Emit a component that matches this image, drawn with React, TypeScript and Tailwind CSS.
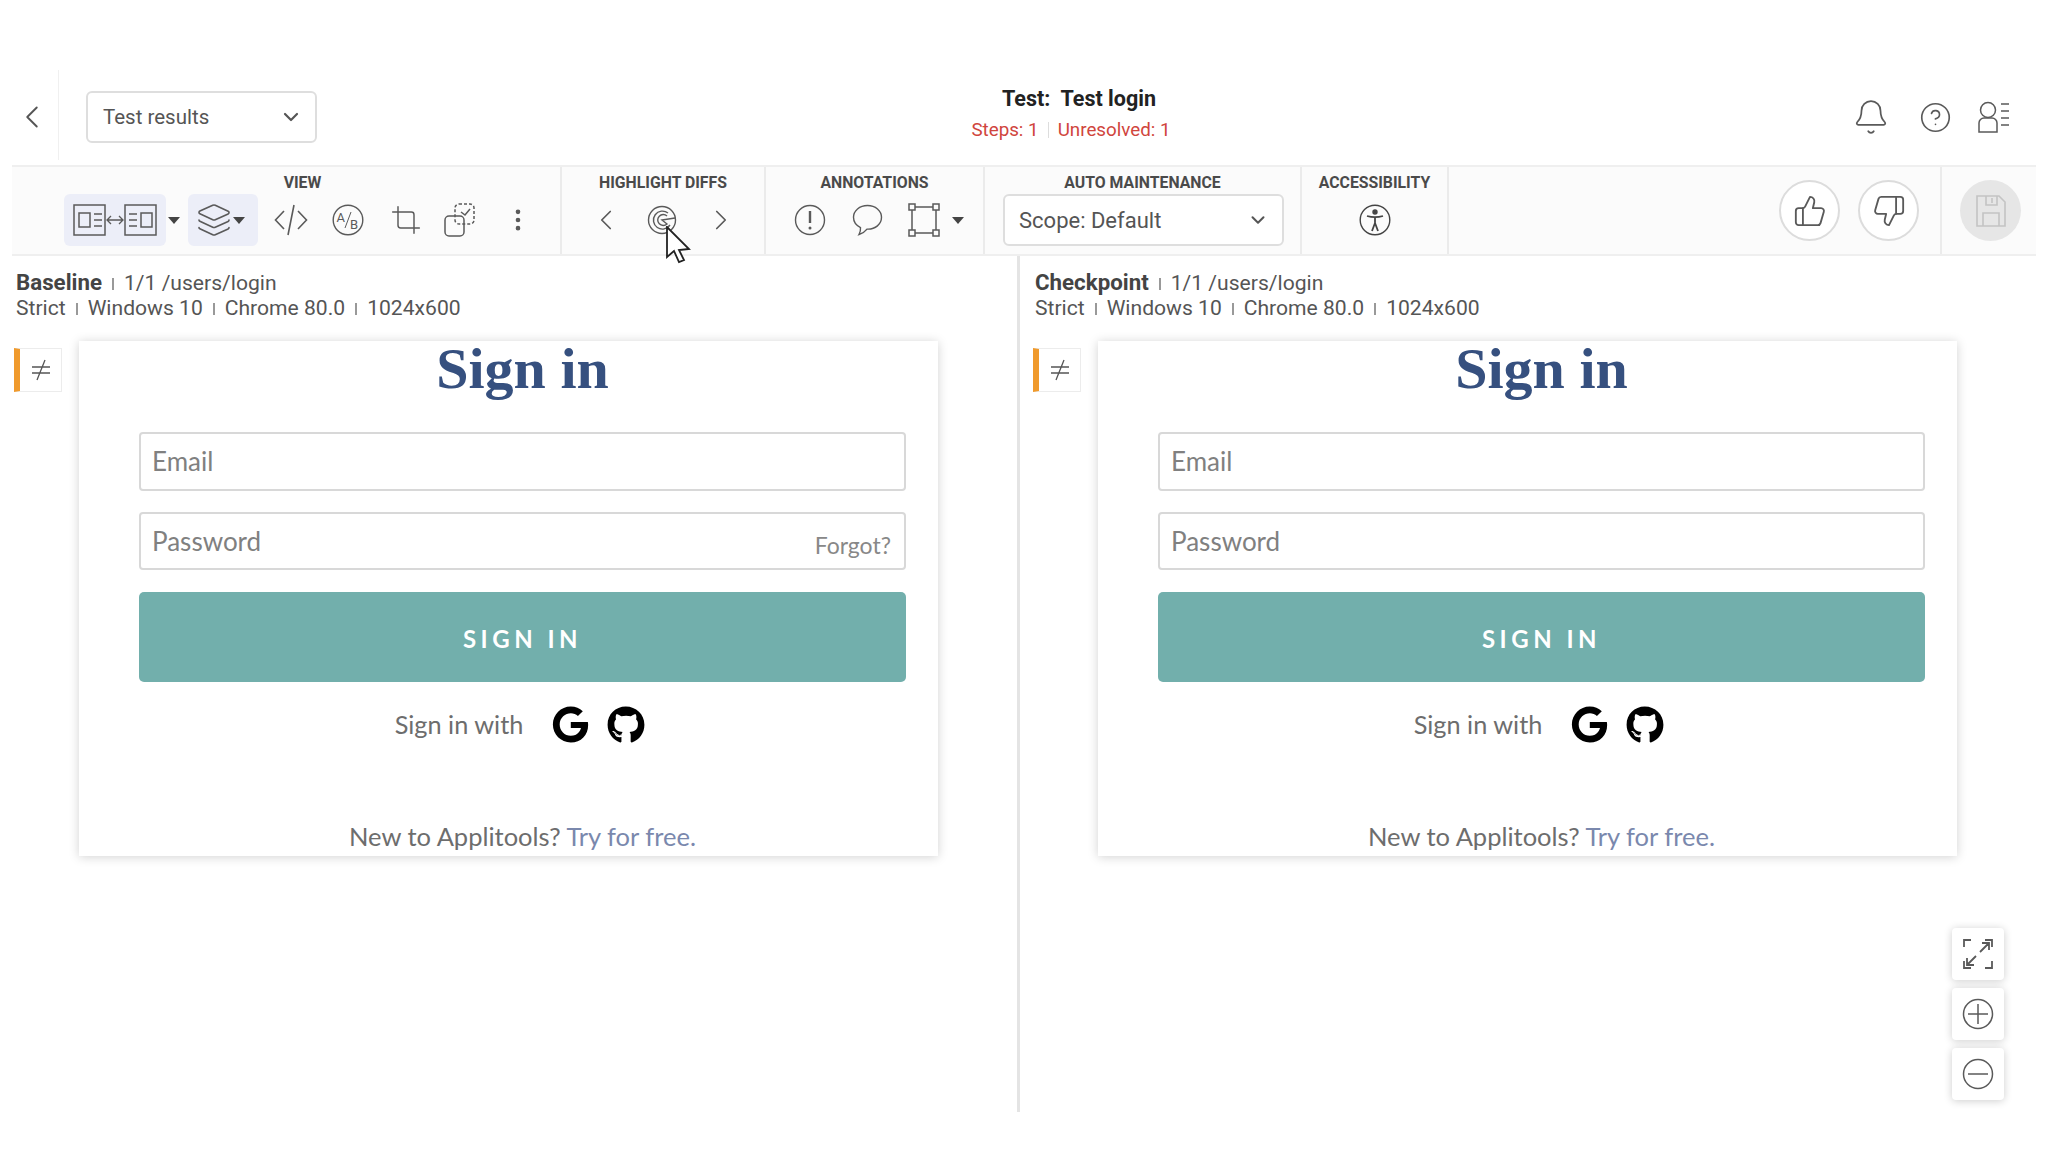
import { Bell, ChevronDown, ChevronLeft, ChevronRight, CircleHelp, Crop, EllipsisVertical, Layers, ThumbsDown, ThumbsUp } from 'lucide-react';
import { FaGithub, FaGoogle } from 'react-icons/fa';
import type { ReactNode } from 'react';

const ic = '#5a5a5a';

function Caret() {
  return (
    <svg width="12" height="7" viewBox="0 0 12 7"><path d="M0 0h12L6 7z" fill="#444" /></svg>
  );
}

function SplitIcon({ flip }: { flip?: boolean }) {
  return (
    <svg width="33" height="32" viewBox="0 0 33 32" fill="none" stroke={ic} strokeWidth="1.5">
      <rect x="1" y="1" width="31" height="30" />
      {flip ? (
        <>
          <rect x="17" y="9" width="11" height="14" />
          <path d="M5 10h8M5 16h8M5 22h8" />
        </>
      ) : (
        <>
          <rect x="6" y="9" width="11" height="14" />
          <path d="M21 10h8M21 16h8M21 22h8" />
        </>
      )}
    </svg>
  );
}

function Section({ label, className, rowClass, children }: { label: string; className: string; rowClass?: string; children: ReactNode }) {
  return (
    <div className={`flex flex-col items-center border-r-2 border-[#ebebeb] ${className}`}>
      <div className="mt-[6px] h-[20px] text-[15.800px] leading-[20px] font-bold whitespace-nowrap text-[#4a4a4a]">{label}</div>
      <div className={`mt-[1px] flex h-[52px] w-full items-center ${rowClass ?? ''}`}>{children}</div>
    </div>
  );
}

function Toolbar() {
  return (
    <div className="mx-[12px] flex h-[91px] w-[2024px] border-y-2 border-[#efefef] bg-[#fbfbfb]">
      <Section label="VIEW" className="w-[550px] pl-[52px] pr-[19px]">
        <div className="flex h-[52px] w-[102px] items-center justify-center gap-0 rounded-[6px] bg-[#eceef8]">
          <SplitIcon />
          <svg width="18" height="10" viewBox="0 0 18 10" fill="none" stroke={ic} strokeWidth="1.3"><path d="M1 5h16M5 1 1 5l4 4M13 1l4 4-4 4" /></svg>
          <SplitIcon flip />
        </div>
        <div className="ml-[2px]"><Caret /></div>
        <div className="ml-[8px] flex h-[52px] w-[70px] items-center gap-[1px] rounded-[6px] bg-[#eceef8] pl-[8px]">
          <Layers size={36} color={ic} strokeWidth={1.1} />
          <Caret />
        </div>
        <svg className="ml-[16px]" width="34" height="32" viewBox="0 0 34 32" fill="none" stroke={ic} strokeWidth="1.6">
          <path d="M10 7 1.500 16 10 25M24 7l8.500 9L24 25M20 1 14 31" />
        </svg>
        <svg className="ml-[24px]" width="32" height="32" viewBox="0 0 32 32" fill="none" stroke={ic} strokeWidth="1.4">
          <circle cx="16" cy="16" r="14.800" />
          <path d="m13 24 6-16" strokeWidth="1" />
          <text x="4.500" y="18" fontSize="13" fill={ic} stroke="none" fontFamily="Roboto, sans-serif">A</text>
          <text x="18" y="25" fontSize="13" fill={ic} stroke="none" fontFamily="Roboto, sans-serif">B</text>
        </svg>
        <Crop className="ml-[26px]" size={32} color={ic} strokeWidth={1.1} />
        <svg className="ml-[22px]" width="32" height="34" viewBox="0 0 32 34" fill="none" stroke={ic} strokeWidth="1.5">
          <rect x="1" y="13" width="19" height="20" rx="4" />
          <rect x="11" y="1" width="19" height="20" rx="4" strokeDasharray="3 2" />
          <path d="m17 9 4 3 5-6" />
        </svg>
        <EllipsisVertical className="ml-[28px]" size={28} color={ic} strokeWidth={2} />
      </Section>
      <Section label="HIGHLIGHT DIFFS" className="w-[204px]" rowClass="pl-[27px]">
        <ChevronLeft size={34} color={ic} strokeWidth={1.2} />
        <svg className="ml-[24px]" width="30" height="32" viewBox="0 0 30 32" fill="none" stroke={ic} strokeWidth="1.4">
          <circle cx="15" cy="16" r="13.500" />
          <path d="M21 9a9 9 0 1 0 2 12" />
          <path d="M20 12a5.500 5.500 0 1 0 0 8l-5-4 13-2" />
        </svg>
        <ChevronRight className="ml-[27px]" size={34} color={ic} strokeWidth={1.2} />
      </Section>
      <Section label="ANNOTATIONS" className="w-[219px]" rowClass="pl-[28px]">
        <svg width="32" height="32" viewBox="0 0 32 32" fill="none" stroke={ic} strokeWidth="1.4">
          <circle cx="16" cy="16" r="14.500" />
          <path d="M16 7v12" strokeWidth="2.400" />
          <circle cx="16" cy="24" r="1.500" fill={ic} stroke="none" />
        </svg>
        <svg className="ml-[26px]" width="31" height="32" viewBox="0 0 31 32" fill="none" stroke={ic} strokeWidth="1.4">
          <path d="M15.500 1.500c-8 0-14 5.200-14 11.800 0 4.600 3 8.300 7 10.300.2 2.600-.2 4.800-1.500 6.900 3.500-1 6.300-3.200 8-5.400 8.500.5 14.500-5.200 14.500-11.800S23.500 1.500 15.500 1.500z" />
        </svg>
        <svg className="ml-[25px]" width="32" height="34" viewBox="0 0 32 34" fill="none" stroke={ic} strokeWidth="1.5">
          <path d="M7 4h18M7 30h18M4 7v20M28 7v20" />
          <rect x="1" y="1" width="6" height="6" />
          <rect x="25" y="1" width="6" height="6" />
          <rect x="1" y="27" width="6" height="6" />
          <rect x="25" y="27" width="6" height="6" />
        </svg>
        <div className="ml-[12px]"><Caret /></div>
      </Section>
      <Section label="AUTO MAINTENANCE" className="w-[317px]" rowClass="pl-[18px]">
        <div className="flex h-[52px] w-[281px] items-center justify-between rounded-[6px] border-2 border-[#dedede] bg-white pl-[14px] pr-[13px] text-[22px] text-[#555]">
          Scope: Default
          <ChevronDown size={22} color="#555" strokeWidth={2.2} />
        </div>
      </Section>
      <Section label="ACCESSIBILITY" className="w-[147px]" rowClass="justify-center">
        <svg width="32" height="32" viewBox="0 0 32 32" fill="none" stroke="#444" strokeWidth="1.4">
          <circle cx="16" cy="16" r="14.800" />
          <circle cx="16" cy="8" r="2" fill="#444" />
          <path d="M8 12c5 1.500 11 1.500 16 0M16 13v6M16 19l-3 8M16 19l3 8" strokeWidth="1.800" />
        </svg>
      </Section>
      <div className="flex w-[494px] items-start">
        <div className="mt-[13px] ml-[330px] flex gap-[18px]">
          <div className="flex h-[61px] w-[61px] items-center justify-center rounded-full border-2 border-[#dcdcdc] bg-white">
            <ThumbsUp size={34} color={ic} strokeWidth={1.3} />
          </div>
          <div className="flex h-[61px] w-[61px] items-center justify-center rounded-full border-2 border-[#dcdcdc] bg-white">
            <ThumbsDown size={34} color={ic} strokeWidth={1.3} />
          </div>
        </div>
        <div className="ml-[21px] flex h-full items-start border-l-2 border-[#ebebeb] pl-[18px]">
          <div className="mt-[13px] flex h-[61px] w-[61px] items-center justify-center rounded-full bg-[#e6e6e6]">
            <svg width="30" height="32" viewBox="0 0 30 32" fill="none" stroke="#c4c4c4" strokeWidth="1.600">
              <path d="M1 1h22l6 6v24H1zM7 31V18h16v13M10 1v9h11V1M16 3v5" />
            </svg>
          </div>
        </div>
      </div>
    </div>
  );
}

function SignInCard({ forgot }: { forgot?: boolean }) {
  return (
    <div className="flex h-[515px] w-[859px] flex-col items-center bg-white pl-[60px] pr-[32px] font-['Lato',sans-serif] shadow-[0_1px_10px_rgba(0,0,0,0.18)]">
      <h1 className="mt-[-2px] h-[60px] font-['Liberation_Serif',serif] text-[58px] leading-[59px] font-bold text-[#36507f]">Sign in</h1>
      <div className="mt-[33px] flex h-[59px] w-[767px] items-center rounded-[4px] border-2 border-[#d8d8d8] pl-[11px] text-[26px] text-[#808080]">Email</div>
      <div className="mt-[21px] flex h-[58px] w-[767px] items-center justify-between rounded-[4px] border-2 border-[#d8d8d8] pl-[11px] pr-[13px] text-[26px] text-[#808080]">
        <span>Password</span>
        {forgot && <span className="mt-[8px] text-[23px] text-[#888]">Forgot?</span>}
      </div>
      <div className="mt-[22px] flex h-[90px] w-[767px] items-center justify-center rounded-[5px] bg-[#72afac] pt-[3px] text-[24px] font-bold tracking-[4.500px] text-white">SIGN IN</div>
      <div className="mt-[24px] mr-[5px] flex h-[37px] items-center text-[25.300px] text-[#6d6d6d]">
        <span>Sign in with</span>
        <FaGoogle className="ml-[29px]" size={37} color="#000" />
        <FaGithub className="ml-[18px]" size={38} color="#000" />
      </div>
      <div className="mt-[75px] text-[25.500px] leading-[36px] text-[#6d6d6d]">
        New to Applitools? <span className="text-[#7a88ad]">Try for free.</span>
      </div>
    </div>
  );
}

function Sep() {
  return <span className="mx-[10px] inline-block h-[12px] w-[2px] bg-[#999]" />;
}

function Pane({ name, forgot, className }: { name: string; forgot?: boolean; className: string }) {
  return (
    <div className={className}>
      <div className="h-[85px] pt-[14px] text-[21.100px] leading-[25px] text-[#555]">
        <div><b className="text-[22.300px] font-bold text-[#444]">{name}</b><Sep />1/1 /users/login</div>
        <div>Strict<Sep />Windows 10<Sep />Chrome 80.0<Sep />1024x600</div>
      </div>
      <div className="flex items-start">
        <div className="mt-[7px] -ml-[2px] flex h-[44px] w-[48px] items-center justify-center border border-l-[6px] border-[#ececec] border-l-[#f09a2c] bg-white">
          <svg width="20" height="24" viewBox="0 0 20 24" fill="none" stroke="#555" strokeWidth="1.300"><path d="M1 9h18M1 15h18M14 2 6 22" /></svg>
        </div>
        <div className="ml-[17px]"><SignInCard forgot={forgot} /></div>
      </div>
    </div>
  );
}

function ZoomButton({ children }: { children: ReactNode }) {
  return (
    <div className="flex h-[52px] w-[52px] items-center justify-center rounded-[4px] bg-white shadow-[0_1px_8px_rgba(0,0,0,0.2)]">{children}</div>
  );
}

export default function App() {
  return (
    <div className="relative h-[1152px] w-[2048px] overflow-hidden bg-white font-['Roboto',sans-serif]">
      <div className="flex h-[165px] items-start pt-[70px]">
        <div className="flex h-[90px] w-[59px] items-center justify-center border-r border-[#f0f0f0]">
          <ChevronLeft className="mt-[3px] ml-[6px]" size={38} color="#555" strokeWidth={1.2} />
        </div>
        <div className="mt-[21px] ml-[27px] flex h-[52px] w-[231px] items-center justify-between rounded-[6px] border-2 border-[#dedede] pl-[15px] pr-[12px] text-[20.500px] text-[#555]">
          Test results
          <ChevronDown size={24} color="#555" strokeWidth={2.2} />
        </div>
        <div className="ml-[512px] mt-[15px] flex w-[500px] flex-col items-center">
          <div className="text-[21.500px] leading-[28px] font-bold text-[#222]">Test:&nbsp; Test login</div>
          <div className="mt-[6px] mr-[16px] flex items-center text-[18.800px] leading-[22px] text-[#d0453d]">
            Steps: 1
            <span className="mx-[9px] h-[16px] w-px bg-[#ddd]" />
            Unresolved: 1
          </div>
        </div>
        <div className="ml-[523px] mt-[28px] flex items-center">
          <Bell size={38} color={ic} strokeWidth={1.1} />
          <CircleHelp className="ml-[29px]" size={33} color={ic} strokeWidth={1.2} />
          <svg className="ml-[25px]" width="32" height="32" viewBox="0 0 32 32" fill="none" stroke={ic} strokeWidth="1.5">
            <circle cx="11" cy="9" r="7.500" />
            <path d="M2 31V22a5 5 0 0 1 5-5h8a5 5 0 0 1 5 5v9zM24 3h8M24 10h8M24 17h8M24 24h8" />
          </svg>
        </div>
      </div>
      <Toolbar />
      <div className="flex h-[856px]">
        <Pane name="Baseline" forgot className="w-[1020px] border-r-[3px] border-[#e4e4e4] pl-[16px] pb-[40px]" />
        <Pane name="Checkpoint" className="w-[1028px] pl-[15px]" />
      </div>
      <svg className="absolute left-[665px] top-[226px]" width="30" height="40" viewBox="0 0 30 40">
        <path d="M2 1v30l7-6 5 11 5-2-5-10 10-1z" fill="#fff" stroke="#222" strokeWidth="1.800" />
      </svg>
      <div className="absolute left-[1952px] top-[928px] flex flex-col gap-[8px]">
        <ZoomButton>
          <svg width="30" height="30" viewBox="0 0 30 30" fill="none" stroke={ic} strokeWidth="1.800">
            <path d="M1 8V1h7M22 1h7v7M1 22v7h7M29 22v7h-7M17 13l9-9M19 4h7v7M13 17l-9 9M4 19v7h7" />
          </svg>
        </ZoomButton>
        <ZoomButton>
          <svg width="32" height="32" viewBox="0 0 32 32" fill="none" stroke={ic} strokeWidth="1.5"><circle cx="16" cy="16" r="14.500" /><path d="M6 16h20M16 6v20" /></svg>
        </ZoomButton>
        <ZoomButton>
          <svg width="32" height="32" viewBox="0 0 32 32" fill="none" stroke={ic} strokeWidth="1.5"><circle cx="16" cy="16" r="14.500" /><path d="M6 16h20" /></svg>
        </ZoomButton>
      </div>
    </div>
  );
}
